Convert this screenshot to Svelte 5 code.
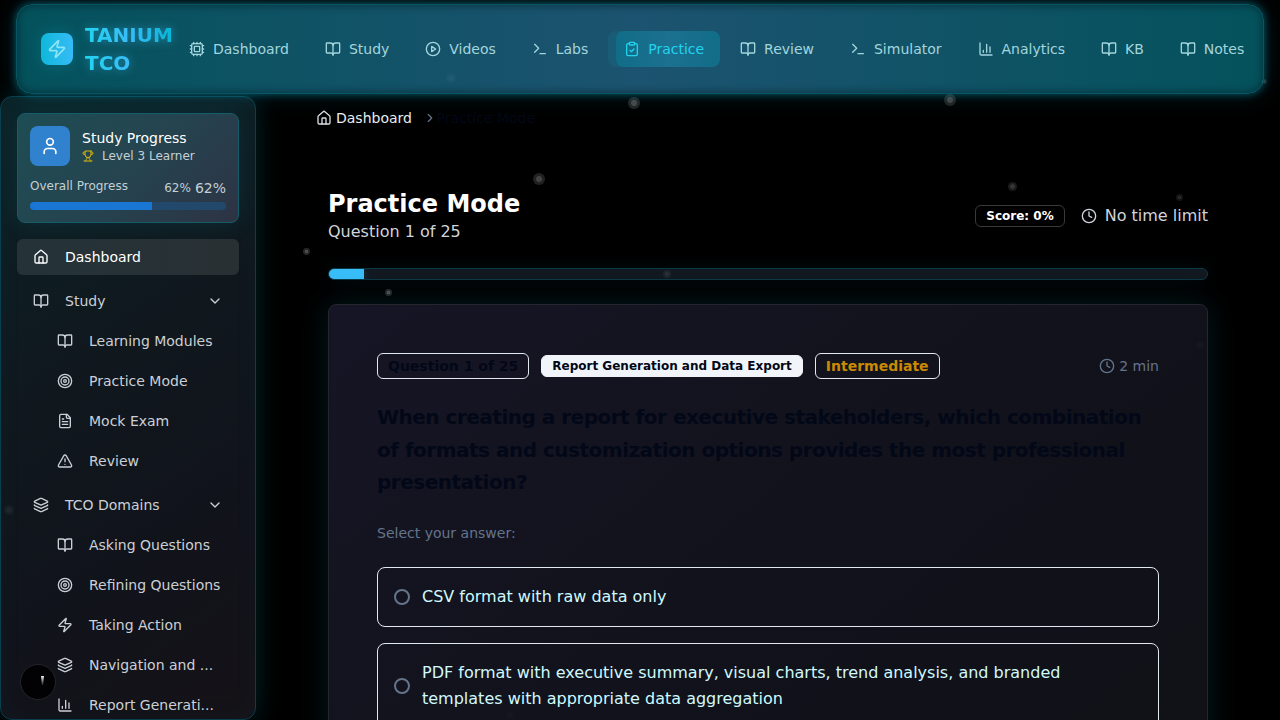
<script>
  const icons = {
    zap: '<path d="M4 14a1 1 0 0 1-.78-1.63l9.9-10.2a.5.5 0 0 1 .86.46l-1.92 6.02A1 1 0 0 0 13 10h7a1 1 0 0 1 .78 1.63l-9.9 10.2a.5.5 0 0 1-.86-.46l1.92-6.02A1 1 0 0 0 11 14z"/>',
    cpu: '<rect width="16" height="16" x="4" y="4" rx="2"/><rect width="8" height="8" x="8" y="8" rx="1"/><path d="M12 20v2M12 2v2M17 20v2M17 2v2M2 12h2M2 17h2M2 7h2M20 12h2M20 17h2M20 7h2M7 20v2M7 2v2"/>',
    book: '<path d="M12 7v14"/><path d="M3 18a1 1 0 0 1-1-1V4a1 1 0 0 1 1-1h5a4 4 0 0 1 4 4 4 4 0 0 1 4-4h5a1 1 0 0 1 1 1v13a1 1 0 0 1-1 1h-6a3 3 0 0 0-3 3 3 3 0 0 0-3-3z"/>',
    play: '<circle cx="12" cy="12" r="10"/><path d="m10 8 6 4-6 4z"/>',
    terminal: '<path d="m4 17 6-6-6-6"/><path d="M12 19h8"/>',
    clipboard: '<rect width="8" height="4" x="8" y="2" rx="1"/><path d="M16 4h2a2 2 0 0 1 2 2v14a2 2 0 0 1-2 2H6a2 2 0 0 1-2-2V6a2 2 0 0 1 2-2h2"/><path d="m9 14 2 2 4-4"/>',
    chart: '<path d="M3 3v16a2 2 0 0 0 2 2h16"/><path d="M18 17V9M13 17V5M8 17v-3"/>',
    home: '<path d="M15 21v-8a1 1 0 0 0-1-1h-4a1 1 0 0 0-1 1v8"/><path d="M3 10a2 2 0 0 1 .709-1.528l7-6a2 2 0 0 1 2.582 0l7 6A2 2 0 0 1 21 10v9a2 2 0 0 1-2 2H5a2 2 0 0 1-2-2z"/>',
    target: '<circle cx="12" cy="12" r="10"/><circle cx="12" cy="12" r="6"/><circle cx="12" cy="12" r="2"/>',
    file: '<path d="M15 2H6a2 2 0 0 0-2 2v16a2 2 0 0 0 2 2h12a2 2 0 0 0 2-2V7Z"/><path d="M14 2v4a2 2 0 0 0 2 2h4M10 9H8M16 13H8M16 17H8"/>',
    alert: '<path d="m21.73 18-8-14a2 2 0 0 0-3.48 0l-8 14A2 2 0 0 0 4 21h16a2 2 0 0 0 1.73-3"/><path d="M12 9v4M12 17h.01"/>',
    layers: '<path d="M12.83 2.18a2 2 0 0 0-1.66 0L2.6 6.08a1 1 0 0 0 0 1.83l8.58 3.91a2 2 0 0 0 1.66 0l8.58-3.9a1 1 0 0 0 0-1.83z"/><path d="M2 12a1 1 0 0 0 .58.91l8.6 3.91a2 2 0 0 0 1.65 0l8.58-3.9A1 1 0 0 0 22 12"/><path d="M2 17a1 1 0 0 0 .58.91l8.6 3.91a2 2 0 0 0 1.65 0l8.58-3.9A1 1 0 0 0 22 17"/>',
    user: '<path d="M19 21v-2a4 4 0 0 0-4-4H9a4 4 0 0 0-4 4v2"/><circle cx="12" cy="7" r="4"/>',
    trophy: '<path d="M6 9H4.5a2.5 2.5 0 0 1 0-5H6M18 9h1.5a2.5 2.5 0 0 0 0-5H18M4 22h16M10 14.66V17c0 .55-.47.98-.97 1.21C7.85 18.75 7 20.24 7 22M14 14.66V17c0 .55.47.98.97 1.21C16.15 18.75 17 20.24 17 22M18 2H6v7a6 6 0 0 0 12 0V2Z"/>',
    down: '<path d="m6 9 6 6 6-6"/>',
    right: '<path d="m9 18 6-6-6-6"/>',
    clock: '<circle cx="12" cy="12" r="10"/><path d="M12 6v6l4 2"/>'
  };
  const nav = [
    ['cpu', 'Dashboard'], ['book', 'Study'], ['play', 'Videos'], ['terminal', 'Labs'],
    ['clipboard', 'Practice'], ['book', 'Review'], ['terminal', 'Simulator'],
    ['chart', 'Analytics'], ['book', 'KB'], ['book', 'Notes']
  ];
  const groups = [
    { icon: 'book', label: 'Study', items: [['book', 'Learning Modules'], ['target', 'Practice Mode'], ['file', 'Mock Exam'], ['alert', 'Review']] },
    { icon: 'layers', label: 'TCO Domains', items: [['book', 'Asking Questions'], ['target', 'Refining Questions'], ['zap', 'Taking Action'], ['layers', 'Navigation and ...'], ['chart', 'Report Generati...']] }
  ];
  const options = [
    'CSV format with raw data only',
    'PDF format with executive summary, visual charts, trend analysis, and branded templates with appropriate data aggregation'
  ];
  // Floating particles: x, y, radius, opacity
  const dots = [
    [633.8, 102.7, 6, 0.27], [949.6, 100.2, 6, 0.25], [539.3, 179.2, 6, 0.26], [1012.6, 186.7, 4.7, 0.21],
    [1179.7, 197.4, 3.4, 0.16], [306.8, 251.8, 3.4, 0.3], [388.8, 292.5, 3.4, 0.3], [667, 273.7, 4, 0.1],
    [450.6, 78.4, 5, 0.05], [1264.2, 81.2, 2.7, 0.16], [9.2, 509.5, 5, 0.07], [1200, 345, 4, 0.025], [510, 715, 4, 0.02]
  ];
</script>

{#snippet icon(name, size = 16)}
  <svg class="icon" width={size} height={size} viewBox="0 0 24 24">{@html icons[name]}</svg>
{/snippet}

<div class="page">
  <header>
    <div class="logo">{@render icon('zap', 20)}</div>
    <div class="brand">TANIUM TCO</div>
    <nav>
      {#each nav as [name, label]}
        <a class="navitem" class:active={label === 'Practice'}>
          <span class="inner">{@render icon(name)}<span>{label}</span></span>
        </a>
      {/each}
    </nav>
  </header>

  <div class="body">
    <aside>
      <section class="profile">
        <div class="who">
          <div class="avatar">{@render icon('user', 20)}</div>
          <div>
            <div class="name">Study Progress</div>
            <div class="level">{@render icon('trophy', 12)}<span>Level 3 Learner</span></div>
          </div>
        </div>
        <div class="overall">
          <span>Overall Progress</span>
          <span class="pcts"><span>62%</span><span class="big">62%</span></span>
        </div>
        <div class="meter"><div class="fill" style="width: 62%"></div></div>
      </section>

      <div class="row current">{@render icon('home')}<span>Dashboard</span></div>
      {#each groups as g}
        <div class="group">
          <div class="row">{@render icon(g.icon)}<span class="lbl">{g.label}</span>{@render icon('down')}</div>
          {#each g.items as [name, label]}
            <div class="row sub">{@render icon(name)}<span class="lbl">{label}</span></div>
          {/each}
        </div>
      {/each}
    </aside>

    <main>
      <div class="crumbs">
        {@render icon('home')}<span class="link">Dashboard</span>
        <span class="sep">{@render icon('right', 14)}</span><span class="here">Practice Mode</span>
      </div>
      <div class="content">
        <div class="heading">
          <div>
            <h1>Practice Mode</h1>
            <p>Question 1 of 25</p>
          </div>
          <div class="status">
            <span class="score">Score: 0%</span>
            <span class="limit">{@render icon('clock')}<span>No time limit</span></span>
          </div>
        </div>
        <div class="progress"><div class="done" style="width: 4%"></div></div>
        <section class="card">
          <div class="badges">
            <span class="badge">Question 1 of 25</span>
            <span class="badge solid">Report Generation and Data Export</span>
            <span class="badge level-badge">Intermediate</span>
            <span class="time">{@render icon('clock')}2 min</span>
          </div>
          <h2>When creating a report for executive stakeholders, which combination of formats and customization options provides the most professional presentation?</h2>
          <p class="prompt">Select your answer:</p>
          {#each options as o}
            <div class="option"><span class="radio"></span><span>{o}</span></div>
          {/each}
        </section>
      </div>
    </main>
  </div>

  {#each dots as [x, y, r, o]}
    <i class="dot" style="left:{x - r}px;top:{y - r}px;width:{2 * r}px;height:{2 * r}px;opacity:{o}"></i>
  {/each}
  <div class="fab"><i></i></div>
</div>

<style>
  :global(body) { background: #000; overflow: hidden; }
  .page, .page * { box-sizing: border-box; }
  .page {
    position: relative; width: 1280px; height: 720px; overflow: hidden; background: #000;
    font-family: "DejaVu Sans", sans-serif; font-size: 14px; line-height: 20px; color: #fff;
    display: flex; flex-direction: column;
  }
  h1, h2, p { margin: 0; }
  .icon { flex: none; display: block; fill: none; stroke: currentColor; stroke-width: 2; stroke-linecap: round; stroke-linejoin: round; }

  header {
    margin: 4px 16px 2px; height: 90px; flex: none; padding: 0 2px 0 24px; display: flex; align-items: center;
    border: 1px solid #075663; border-radius: 16px;
    background: linear-gradient(90deg, #04525c 0%, #1c5370 50%, #04525c 100%);
    box-shadow: 0 0 8px rgba(8, 145, 170, .6), 0 0 26px rgba(6, 182, 212, .16), inset 0 0 8px rgba(0, 20, 30, .6);
    position: relative; z-index: 1;
  }
  .logo {
    width: 32px; height: 32px; border-radius: 8px; display: grid; place-items: center; flex: none;
    color: #8ce4f4; background: linear-gradient(90deg, #0fb8d9, #36bbf7); box-shadow: 0 0 16px rgba(6, 182, 212, .25);
  }
  .brand {
    margin-left: 12px; width: 88px; flex: none; font-size: 20px; line-height: 28px; font-weight: 700;
    background: linear-gradient(90deg, #22d3ee, #38bdf8 50%, #06b6d4); -webkit-background-clip: text; background-clip: text; color: transparent;
    filter: drop-shadow(0 0 5px rgba(56, 189, 248, .5));
  }
  nav { display: flex; gap: 3.95px; }
  .navitem { padding-left: 8px; border-radius: 8px; color: #a3d5dd; }
  .inner { display: flex; align-items: center; gap: 8px; padding: 8px 16px 8px 8px; border-radius: 8px; }
  .active { background: #1a5c76; color: #22d3ee; }
  .active .inner { background: linear-gradient(90deg, #106d88, #1c7090 50%, #116d88); }

  .body { display: flex; flex: 1; min-height: 0; }
  aside {
    width: 256px; flex: none; padding: 16px; border: 1px solid #083f4c; border-radius: 12px; overflow: hidden;
    background: linear-gradient(145deg, #0c2226 0%, #10171d 45%, #11131b 70%, #151217 100%);
    box-shadow: 0 0 26px rgba(6, 182, 212, .2), inset 0 0 30px rgba(6, 182, 212, .03);
    color: #cbd0d6;
  }
  .profile {
    height: 110px; padding: 12px; border: 1px solid #155c6b; border-radius: 8px; margin-bottom: 16px;
    background: linear-gradient(135deg, #1e4d54, #254450 50%, #2d3344);
    box-shadow: 0 0 24px rgba(6, 182, 212, .13);
  }
  .who { display: flex; gap: 12px; align-items: center; }
  .avatar { width: 40px; height: 40px; border-radius: 8px; display: grid; place-items: center; background: #3182ce; color: #fff; }
  .name { color: #fff; line-height: 20px; }
  .level { display: flex; gap: 8px; align-items: center; font-size: 12px; line-height: 16px; color: #c5d0d6; }
  .level .icon { color: #dcb70c; }
  .overall { display: flex; justify-content: space-between; font-size: 12px; line-height: 16px; margin-top: 12px; height: 20px; color: #c3cfd5; }
  .pcts { display: flex; gap: 4px; line-height: 20px; }
  .big { font-size: 14px; }
  .meter { margin-top: 4px; height: 8px; border-radius: 4px; background: #22496c; overflow: hidden; }
  .fill { height: 100%; background: #1976d2; }
  .row { height: 36px; padding: 0 16px; display: flex; align-items: center; gap: 16px; border-radius: 6px; }
  .current { background: linear-gradient(90deg, #243338, #293034); color: #fff; }
  .group { margin-top: 8px; }
  .sub { margin-top: 4px; padding-left: 40px; padding-right: 16px; }
  .lbl { flex: 1; white-space: nowrap; min-width: 0; }

  main { flex: 1; min-width: 0; padding: 12px 72px 0; }
  .crumbs { display: flex; align-items: center; margin-left: -12px; color: #d9dde3; height: 20px; }
  .link { margin-left: 4px; color: #e9edf2; }
  .sep { color: #64748b; margin-left: 10.6px; }
  .here { color: #020817; }
  .heading { margin-top: 60px; display: flex; justify-content: space-between; align-items: center; height: 56px; }
  h1 { font-size: 24px; line-height: 32px; font-weight: 700; }
  .heading p { font-size: 16px; line-height: 24px; color: #d1d5db; }
  .status { display: flex; align-items: center; gap: 16px; }
  .score { border: 1px solid #393939; border-radius: 6px; font-size: 12px; line-height: 16px; font-weight: 700; padding: 2px 10px; }
  .limit { display: flex; align-items: center; gap: 8px; font-size: 16px; line-height: 24px; color: #d1d5db; }
  .progress {
    margin-top: 24px; height: 12px; border: 1px solid #0b3945; border-radius: 6px; background: #111820; overflow: hidden;
    box-shadow: 0 0 18px rgba(6, 182, 212, .08);
  }
  .done { height: 100%; background: #38bdf8; box-shadow: 0 0 10px rgba(56, 189, 248, .25); }
  .card {
    margin-top: 24px; height: 640px; padding: 48px; border: 1px solid #25252e; border-radius: 8px;
    background: linear-gradient(140deg, #161525 0%, #13131e 35%, #11111a 60%, #111116 100%);
    box-shadow: 0 0 30px rgba(6, 182, 212, .14);
  }
  .badges { display: flex; align-items: center; gap: 12px; }
  .badge { height: 26px; line-height: 24px; padding: 0 10px; border: 1px solid #e2e8f0; border-radius: 6px; font-weight: 700; color: #020817; }
  .solid { height: 22px; line-height: 20px; font-size: 12px; background: #f1f5f9; border-color: #f1f5f9; }
  .level-badge { color: #ca8a04; }
  .time { margin-left: auto; display: flex; align-items: center; gap: 4px; color: #64748b; }
  h2 { margin-top: 22px; font-size: 20px; line-height: 32.5px; letter-spacing: -0.5px; font-weight: 700; color: #020817; }
  .prompt { margin-top: 24px; color: #64748b; }
  .option {
    margin-top: 16px; display: flex; align-items: center; gap: 12px; padding: 16px; border: 1px solid #e2e8f0; border-radius: 8px;
    font-size: 16px; line-height: 26px; color: #cffafe;
  }
  .prompt + .option { margin-top: 24px; }
  .radio { width: 16px; height: 16px; flex: none; border: 2px solid #64748b; border-radius: 50%; }

  .dot { position: absolute; border-radius: 50%; background: radial-gradient(circle closest-side, #fff 0 44%, rgba(255, 255, 255, .5) 56% 100%); z-index: 2; }
  .fab { position: absolute; left: 20px; top: 664px; width: 36px; height: 36px; border-radius: 50%; background: #020204; border: 1px solid #252528; z-index: 3; }
  .fab i { position: absolute; left: 20px; top: 11px; width: 3px; height: 9px; background: linear-gradient(#eee, #222); clip-path: polygon(0 0, 100% 0, 70% 100%, 30% 100%); }
</style>
